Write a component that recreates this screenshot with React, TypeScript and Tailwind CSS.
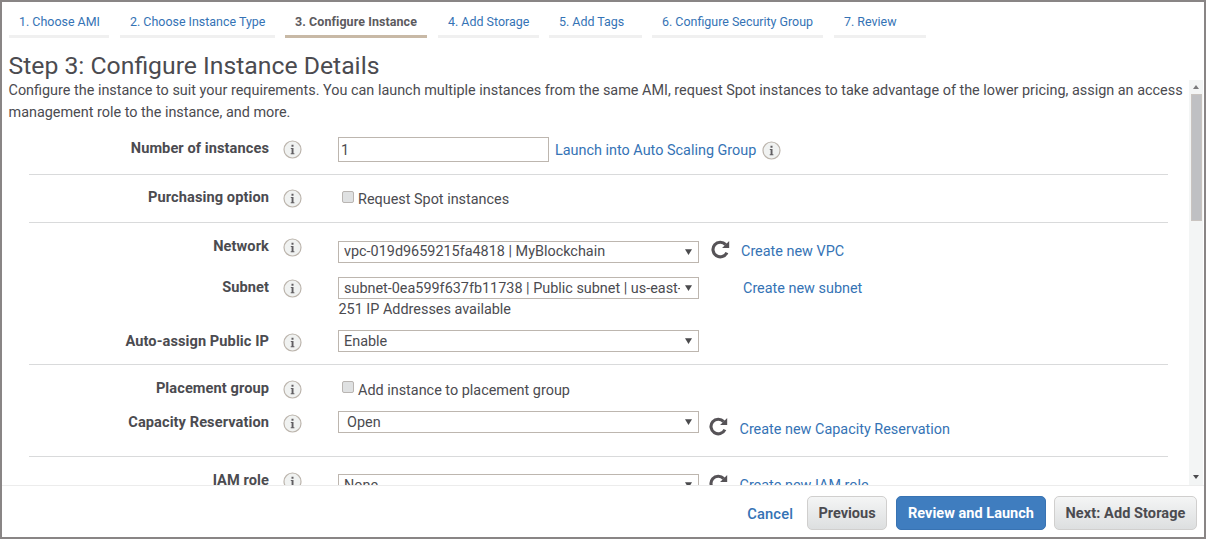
import type { ReactNode } from "react";

type Tab = { label: string; width: string; active?: boolean };

const tabs: Tab[] = [
  { label: "1. Choose AMI", width: "w-[100px] mr-[11px]" },
  { label: "2. Choose Instance Type", width: "w-[155px] mr-[10px]" },
  { label: "3. Configure Instance", width: "w-[142px] mr-[11px]", active: true },
  { label: "4. Add Storage", width: "w-[101px] mr-[10px]" },
  { label: "5. Add Tags", width: "w-[93px] mr-[10px]" },
  { label: "6. Configure Security Group", width: "w-[171px] mr-[11px]" },
  { label: "7. Review", width: "w-[92px]" },
];

function InfoIcon() {
  return (
    <svg className="size-[19px] shrink-0" viewBox="0 0 19 19">
      <circle cx="9.5" cy="9.5" r="8.5" fill="#f0f2f1" stroke="#bcb5ad" strokeWidth="1.2" />
      <path d="M8.5 4.8h2v2h-2zM7.8 8h2.7v5.3h.9v.9H7.7v-.9h.9V9h-.8z" fill="#605e62" />
    </svg>
  );
}

function RefreshIcon() {
  return (
    <svg className="size-[19px] shrink-0" viewBox="0 0 19 19">
      <path d="M14.7 4.6A7.3 7.3 0 1 0 15.9 12.6" fill="none" stroke="#565357" strokeWidth="3.1" />
      <path d="M18.2 1v7.1h-7.1z" fill="#565357" />
    </svg>
  );
}

function Select({ children, inset = "pl-[5px]", textTop = "pt-px" }: { children: ReactNode; inset?: string; textTop?: string }) {
  return (
    <div className={`flex h-[22px] w-[361px] shrink-0 items-center border border-[#bdb6af] bg-white pr-[6px] ${inset}`}>
      <span className={`min-w-0 flex-1 overflow-hidden whitespace-nowrap leading-5 ${textTop}`}>{children}</span>
      <svg className="ml-[5px] h-[7px] w-[7px] shrink-0" viewBox="0 0 7 7">
        <path d="M0 .3h7L3.5 6z" fill="#4a4a4d" />
      </svg>
    </div>
  );
}

function Check({ children, textTop = "-mt-[2px]" }: { children: ReactNode; textTop?: string }) {
  return (
    <label className="flex items-start">
      <span className="ml-[4px] mr-[4px] h-[12px] w-[12px] rounded-[2px] border border-[#b9b5b2] bg-[#dfe1e2]" />
      <span className={`leading-[22px] ${textTop}`}>{children}</span>
    </label>
  );
}

function Link({ children, className = "" }: { children: ReactNode; className?: string }) {
  return <a className={`whitespace-nowrap leading-[22px] text-[#3573b5] ${className}`}>{children}</a>;
}

type RowProps = { label: string; height: string; labelTop: string; contentTop: string; divider?: boolean; children: ReactNode };

function Row({ label, height, labelTop, contentTop, divider, children }: RowProps) {
  return (
    <div className={`box-content flex items-start ${height} ${divider ? "border-b border-[#d9dadb]" : ""}`}>
      <div className={`flex w-[309px] shrink-0 ${labelTop}`}>
        <span className="-mt-px w-[240px] text-right text-[14.6px] font-bold leading-[22px] tracking-[0.08px]">{label}</span>
        <span className="ml-[14px] mt-[2px]">
          <InfoIcon />
        </span>
      </div>
      <div className={`flex items-start ${contentTop}`}>{children}</div>
    </div>
  );
}

export default function App() {
  return (
    <div className="flex h-[539px] w-[1206px] flex-col overflow-hidden border-2 border-[#898585] bg-white font-[Roboto,'Liberation_Sans',sans-serif] text-[14.42px] text-[#4b4b50]">
      <nav className="flex h-9 shrink-0 pl-[7px] pt-[9px] text-[12.45px]">
        {tabs.map((t) => (
          <div
            key={t.label}
            className={`h-[27px] shrink-0 whitespace-nowrap border-b-[3px] pl-[10px] leading-[22px] ${t.width} ${
              t.active ? "border-[#c8b9a6] font-bold tracking-[0.09px] text-[#5c5a5e]" : "border-[#f0f0f0] text-[#3573b5]"
            }`}
          >
            {t.label}
          </div>
        ))}
      </nav>
      <h1 className="mt-[12px] h-[29px] shrink-0 pl-[6.5px] text-[24.75px] leading-[32px]">Step 3: Configure Instance Details</h1>
      <div className="flex h-[407px] shrink-0 overflow-hidden border-b border-[#ececec]">
        <main className="w-[1186px] shrink-0 pl-[6.5px]">
          <p className="h-[43px] whitespace-nowrap pt-px leading-[21.5px]">
            Configure the instance to suit your requirements. You can launch multiple instances from the same AMI, request Spot instances to take advantage of the lower pricing, assign an access
            <br />
            management role to the instance, and more.
          </p>
          <div className="ml-[20.5px] w-[1139px]">
            <Row label="Number of instances" height="h-[52px]" labelTop="pt-[16px]" contentTop="pt-[15px]" divider>
              <div className="h-[25px] w-[211px] border border-[#bdb6af] pl-[2px] leading-[25px]">1</div>
              <Link className="ml-[6px] mt-[3px]">Launch into Auto Scaling Group</Link>
              <span className="ml-[6px] mt-[4px]">
                <InfoIcon />
              </span>
            </Row>
            <Row label="Purchasing option" height="h-[47px]" labelTop="pt-[12px]" contentTop="pt-[16px]" divider>
              <Check>Request Spot instances</Check>
            </Row>
            <Row label="Network" height="h-[44px]" labelTop="pt-[13px]" contentTop="pt-[18px]">
              <Select textTop="pt-0">vpc-019d9659215fa4818 | MyBlockchain</Select>
              <span className="-mt-px ml-[12px]">
                <RefreshIcon />
              </span>
              <Link className="ml-[11px]">Create new VPC</Link>
            </Row>
            <Row label="Subnet" height="h-[53px]" labelTop="pt-[10px]" contentTop="pt-[10px]">
              <div>
                <Select>subnet-0ea599f637fb11738 | Public subnet | us-east-1a</Select>
                <div className="pl-[0.5px] leading-[22px]">251 IP Addresses available</div>
              </div>
              <Link className="ml-[44px] mt-px">Create new subnet</Link>
            </Row>
            <Row label="Auto-assign Public IP" height="h-[44px]" labelTop="pt-[11px]" contentTop="pt-[10px]" divider>
              <Select>Enable</Select>
            </Row>
            <Row label="Placement group" height="h-[40px]" labelTop="pt-[13px]" contentTop="pt-[16px]">
              <Check textTop="-mt-px">Add instance to placement group</Check>
            </Row>
            <Row label="Capacity Reservation" height="h-[51px]" labelTop="pt-[7px]" contentTop="pt-[6px]" divider>
              <Select inset="pl-[8px]" textTop="pt-[2px]">Open</Select>
              <span className="ml-[10px] mt-[6px]">
                <RefreshIcon />
              </span>
              <Link className="ml-[11.5px] mt-[8px]">Create new Capacity Reservation</Link>
            </Row>
            <Row label="IAM role" height="h-[50px]" labelTop="pt-[13px]" contentTop="pt-[17px]">
              <Select textTop="pt-[2px]">None</Select>
              <span className="ml-[10px]">
                <RefreshIcon />
              </span>
              <Link className="ml-[11.5px] mt-px">Create new IAM role</Link>
            </Row>
          </div>
        </main>
        <div className="ml-[1px] mt-[1px] flex w-[14px] flex-col items-center bg-[#f3f5f5]">
          <svg className="mt-[5px] h-[4px] w-[6px]" viewBox="0 0 6 4">
            <path d="M0 4h6L3 0z" fill="#7a7a7c" />
          </svg>
          <div className="mt-[5px] h-[127px] w-[11px] border border-[#c9c4c0] bg-[#bfc0c3]" />
          <svg className="mb-[6px] mt-auto h-[4px] w-[6px]" viewBox="0 0 6 4">
            <path d="M0 0h6L3 4z" fill="#4a4a4d" />
          </svg>
        </div>
      </div>
      <footer className="flex justify-end pr-[7px] pt-[10px] text-[14.5px]">
        <a className="mr-[14px] mt-[1px] text-[14.7px] font-medium leading-[35px] tracking-[0.12px] text-[#3573b5]">Cancel</a>
        <button className="mr-[9px] h-[34px] w-[80px] rounded-[5px] border border-[#d0cfce] bg-linear-to-b from-[#f4f5f5] to-[#dddfe0] pt-px font-bold">Previous</button>
        <button className="mr-[8px] h-[34px] w-[150px] rounded-[5px] border border-[#3873b3] bg-[#3f7dbf] pt-px font-bold tracking-[0.03px] text-white">Review and Launch</button>
        <button className="h-[34px] w-[143px] rounded-[5px] border border-[#d0cfce] bg-linear-to-b from-[#f4f5f5] to-[#dddfe0] pt-px font-bold tracking-[0.08px]">Next: Add Storage</button>
      </footer>
    </div>
  );
}
